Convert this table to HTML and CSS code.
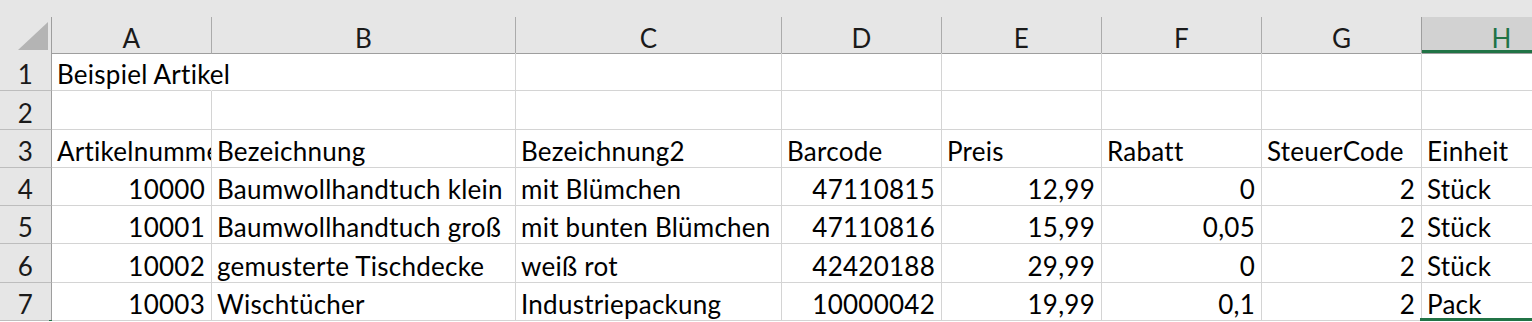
FILE: index.html
```html
<!DOCTYPE html>
<html lang="de">
<head>
    <meta charset="UTF-8">
    <title>Artikel.xlsx</title>
    <link rel="stylesheet" href="styles.css">
</head>
<body>
    <div class="sheet">
        <div class="ribbon-gap"></div>
        <div class="grid">
            <!-- column headers -->
            <div class="corner">
                <svg width="52" height="36" viewBox="0 0 52 36"><polygon points="18,33 48,33 48,5" fill="#b4b4b4"/></svg>
            </div>
            <div class="col-head">A</div>
            <div class="col-head">B</div>
            <div class="col-head">C</div>
            <div class="col-head">D</div>
            <div class="col-head">E</div>
            <div class="col-head">F</div>
            <div class="col-head">G</div>
            <div class="col-head selected">H</div>

            <!-- row 1 -->
            <div class="row-head">1</div>
            <div class="cell overflow">Beispiel Artikel</div>
            <div class="cell"></div>
            <div class="cell"></div>
            <div class="cell"></div>
            <div class="cell"></div>
            <div class="cell"></div>
            <div class="cell"></div>
            <div class="cell"></div>

            <!-- row 2 -->
            <div class="row-head">2</div>
            <div class="cell"></div>
            <div class="cell"></div>
            <div class="cell"></div>
            <div class="cell"></div>
            <div class="cell"></div>
            <div class="cell"></div>
            <div class="cell"></div>
            <div class="cell"></div>

            <!-- row 3: column titles -->
            <div class="row-head">3</div>
            <div class="cell">Artikelnummer</div>
            <div class="cell">Bezeichnung</div>
            <div class="cell">Bezeichnung2</div>
            <div class="cell">Barcode</div>
            <div class="cell">Preis</div>
            <div class="cell">Rabatt</div>
            <div class="cell">SteuerCode</div>
            <div class="cell">Einheit</div>

            <!-- row 4 -->
            <div class="row-head">4</div>
            <div class="cell num">10000</div>
            <div class="cell">Baumwollhandtuch klein</div>
            <div class="cell">mit Blümchen</div>
            <div class="cell num">47110815</div>
            <div class="cell num">12,99</div>
            <div class="cell num">0</div>
            <div class="cell num">2</div>
            <div class="cell">Stück</div>

            <!-- row 5 -->
            <div class="row-head">5</div>
            <div class="cell num">10001</div>
            <div class="cell">Baumwollhandtuch groß</div>
            <div class="cell">mit bunten Blümchen</div>
            <div class="cell num">47110816</div>
            <div class="cell num">15,99</div>
            <div class="cell num">0,05</div>
            <div class="cell num">2</div>
            <div class="cell">Stück</div>

            <!-- row 6 -->
            <div class="row-head">6</div>
            <div class="cell num">10002</div>
            <div class="cell">gemusterte Tischdecke</div>
            <div class="cell">weiß rot</div>
            <div class="cell num">42420188</div>
            <div class="cell num">29,99</div>
            <div class="cell num">0</div>
            <div class="cell num">2</div>
            <div class="cell">Stück</div>

            <!-- row 7 -->
            <div class="row-head last">7</div>
            <div class="cell num">10003</div>
            <div class="cell">Wischtücher</div>
            <div class="cell">Industriepackung</div>
            <div class="cell num">10000042</div>
            <div class="cell num">19,99</div>
            <div class="cell num">0,1</div>
            <div class="cell num">2</div>
            <div class="cell sel-bottom">Pack</div>
        </div>
    </div>
</body>
</html>
```

FILE: styles.css
```css
body {
    margin: 0;
    background: #ffffff;
    overflow: hidden;
    font-family: Lato, "Open Sans", sans-serif;
    font-size: 26px;
    letter-spacing: 0.25px;
    color: #000;
}

.sheet {
    width: 1600px;
}

.ribbon-gap {
    height: 17px;
    background: #e6e6e6;
}

.grid {
    display: grid;
    grid-template-columns: 52px 160px 304px 266px 160px 160px 160px 160px 160px;
    grid-template-rows: 36px repeat(7, 38.3px);
}

.corner {
    background: #e6e6e6;
    border-right: 1px solid #9e9e9e;
    border-bottom: 1px solid #9e9e9e;
    box-sizing: border-box;
    height: 37px;
    overflow: hidden;
}

.corner svg {
    display: block;
}

.col-head {
    background: #e6e6e6;
    border-right: 1px solid #ababab;
    border-bottom: 1px solid #9e9e9e;
    box-sizing: border-box;
    height: 37px;
    display: flex;
    align-items: flex-end;
    justify-content: center;
    line-height: 30px;
    padding-bottom: 0;
    color: #1a1a1a;
}

.col-head.selected {
    background: #d2d2d2;
    color: #217346;
    border-left: 1px solid #9e9e9e;
    margin-left: -1px;
    box-shadow: inset 0 -3px 0 #217346;
}

.row-head {
    position: relative;
    background: #e6e6e6;
    border-right: 1px solid #9e9e9e;
    border-bottom: 1px solid #bdbdbd;
    display: flex;
    align-items: flex-end;
    justify-content: center;
    line-height: 30px;
    padding-bottom: 1px;
    color: #1a1a1a;
}

/* selection edge of the next row header */
.row-head.last::after {
    content: "";
    position: absolute;
    right: -1px;
    bottom: -2px;
    width: 3px;
    height: 2px;
    background: #217346;
}

.cell {
    position: relative;
    border-right: 1px solid #d4d4d4;
    border-bottom: 1px solid #d4d4d4;
    display: flex;
    align-items: flex-end;
    padding: 0 5px 1px 5px;
    line-height: 30px;
    white-space: nowrap;
    overflow: hidden;
}

.cell.num {
    justify-content: flex-end;
    padding-right: 6px;
}

/* text spilling into the empty neighbour hides the gridline */
.cell.overflow {
    overflow: visible;
    border-right-color: transparent;
    z-index: 1;
}

.cell.sel-bottom {
    overflow: visible;
}

.cell.sel-bottom::after {
    content: "";
    position: absolute;
    left: -2px;
    right: 0;
    bottom: -1px;
    height: 3px;
    background: #217346;
}
```
